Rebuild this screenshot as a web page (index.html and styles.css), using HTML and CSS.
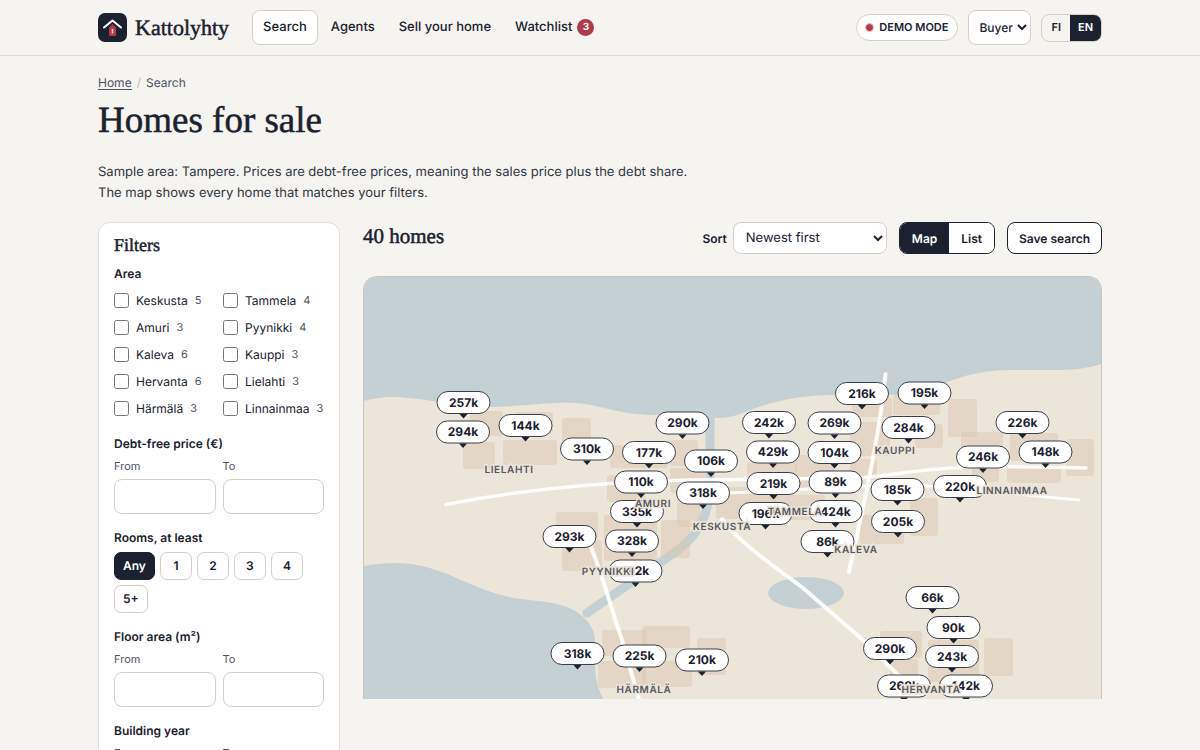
FILE: index.html
```html
<!DOCTYPE html>
<html lang="en">
<head>
<meta charset="utf-8">
<meta name="viewport" content="width=device-width, initial-scale=1">
<title>Homes for sale – Kattolyhty</title>
<link rel="stylesheet" href="styles.css">
</head>
<body>
<header class="site-header">
  <div class="wrap header-row">
    <a class="brand" href="#">
      <svg class="brand-mark" viewBox="0 0 29 29" aria-hidden="true">
        <rect width="29" height="29" rx="7" fill="#1b212e"/>
        <path d="M11 14.500L14.500 11 18 14.500V22a1 1 0 0 1-1 1h-5a1 1 0 0 1-1-1z" fill="#b03a48"/>
        <path d="M6 14.500L14.500 7.500 23 14.500" fill="none" stroke="#fff" stroke-width="2" stroke-linecap="round" stroke-linejoin="round"/>
        <path d="M14.500 16v4.500" stroke="#f3cdd0" stroke-width="1.500"/>
      </svg>
      <span>Kattolyhty</span>
    </a>
    <nav class="nav" aria-label="Main">
      <a class="nav-link current" href="#">Search</a>
      <a class="nav-link" href="#">Agents</a>
      <a class="nav-link" href="#">Sell your home</a>
      <a class="nav-link" href="#">Watchlist <span class="count">3</span></a>
    </nav>
    <div class="tools">
      <span class="demo"><span class="dot"></span>DEMO MODE</span>
      <select class="role" aria-label="Role"><option>Buyer</option><option>Agent</option></select>
      <div class="lang"><button type="button">FI</button><button type="button" class="on">EN</button></div>
    </div>
  </div>
</header>

<main class="wrap">
  <nav class="crumbs" aria-label="Breadcrumb"><a href="#">Home</a><span class="sep">/</span><span>Search</span></nav>
  <h1>Homes for sale</h1>
  <p class="intro">Sample area: Tampere. Prices are debt-free prices, meaning the sales price plus the debt share. The map shows every home that matches your filters.</p>

  <div class="columns">
    <form class="filters">
      <h2>Filters</h2>
      <fieldset>
        <legend>Area</legend>
        <div class="areas">
          <label><input type="checkbox">Keskusta <small>5</small></label>
          <label><input type="checkbox">Tammela <small>4</small></label>
          <label><input type="checkbox">Amuri <small>3</small></label>
          <label><input type="checkbox">Pyynikki <small>4</small></label>
          <label><input type="checkbox">Kaleva <small>6</small></label>
          <label><input type="checkbox">Kauppi <small>3</small></label>
          <label><input type="checkbox">Hervanta <small>6</small></label>
          <label><input type="checkbox">Lielahti <small>3</small></label>
          <label><input type="checkbox">Härmälä <small>3</small></label>
          <label><input type="checkbox">Linnainmaa <small>3</small></label>
        </div>
      </fieldset>
      <fieldset>
        <legend>Debt-free price (€)</legend>
        <div class="range">
          <label>From<input type="text" inputmode="numeric"></label>
          <label>To<input type="text" inputmode="numeric"></label>
        </div>
      </fieldset>
      <fieldset>
        <legend>Rooms, at least</legend>
        <div class="rooms">
          <button type="button" class="on">Any</button>
          <button type="button">1</button>
          <button type="button">2</button>
          <button type="button">3</button>
          <button type="button">4</button>
          <button type="button">5+</button>
        </div>
      </fieldset>
      <fieldset>
        <legend>Floor area (m²)</legend>
        <div class="range">
          <label>From<input type="text" inputmode="numeric"></label>
          <label>To<input type="text" inputmode="numeric"></label>
        </div>
      </fieldset>
      <fieldset>
        <legend>Building year</legend>
        <div class="range">
          <label>From<input type="text" inputmode="numeric"></label>
          <label>To<input type="text" inputmode="numeric"></label>
        </div>
      </fieldset>
    </form>

    <section class="results">
      <div class="results-bar">
        <h2>40 homes</h2>
        <div class="actions">
          <div class="sort"><label for="sort">Sort</label>
            <select id="sort"><option>Newest first</option><option>Lowest price</option></select></div>
          <div class="view"><button type="button" class="on">Map</button><button type="button">List</button></div>
          <button type="button" class="save">Save search</button>
        </div>
      </div>
      <div class="map">
        <svg viewBox="364 277 737 422" preserveAspectRatio="xMidYMin slice" role="group" aria-label="Map of homes">
          <defs>
            <g id="pin">
              <rect x="-26.500" y="-11" width="53" height="22" rx="11" fill="#fff" stroke="#1b212e" stroke-width="1" stroke-opacity=".85"/>
              <path d="M-4 11.500h8L0 16z" fill="#1b212e"/>
            </g>
          </defs>
          <rect x="364" y="277" width="737" height="422" fill="#ece5da"/>
          <g fill="#c5d0d5">
            <path d="M364 277H1101V364C1085 369 1072 370 1057 370H1010C975 371 963 377 947 382C925 392 912 395 885 395H830C790 396 765 404 745 412C735 416 728 418 716 418C695 413 680 414 660 415C620 416 605 405 575 403C550 402 515 407 490 407C450 406 425 398 395 397C380 397 372 399 364 401Z"/>
            <path d="M364 566C385 562 405 562 422 566C455 574 475 589 505 596C530 602 550 600 567 607C585 614 595 628 595 640V665C595 680 599 690 603 699H364Z"/>
            <ellipse cx="806" cy="593" rx="38" ry="16"/>
          </g>
          <path d="M710 415V485C709 520 695 540 668 557L587 613" fill="none" stroke="#c5d0d5" stroke-width="9" stroke-linecap="round"/>
          <g fill="#d9c8b4" fill-opacity=".5">
            <rect x="470" y="411" width="33" height="25" rx="3"/><rect x="463" y="442" width="32" height="27" rx="3"/>
            <rect x="503" y="440" width="54" height="25" rx="3"/><rect x="515" y="412" width="38" height="22" rx="3"/>
            <rect x="562" y="418" width="29" height="30" rx="3"/>
            <rect x="610" y="445" width="58" height="23" rx="3"/><rect x="607" y="475" width="38" height="27" rx="3"/>
            <rect x="670" y="440" width="28" height="26" rx="3"/><rect x="670" y="468" width="35" height="25" rx="3"/>
            <rect x="677" y="492" width="23" height="35" rx="3"/><rect x="661" y="520" width="29" height="38" rx="3"/>
            <rect x="604" y="515" width="53" height="46" rx="3"/><rect x="556" y="512" width="42" height="26" rx="3"/>
            <rect x="562" y="540" width="40" height="31" rx="3"/><rect x="716" y="487" width="60" height="32" rx="3"/>
            <rect x="747" y="462" width="50" height="24" rx="3"/><rect x="795" y="455" width="40" height="35" rx="3"/>
            <rect x="775" y="495" width="50" height="25" rx="3"/><rect x="850" y="459" width="27" height="21" rx="3"/>
            <rect x="852" y="398" width="40" height="19" rx="3"/><rect x="850" y="422" width="40" height="34" rx="3"/>
            <rect x="893" y="395" width="47" height="20" rx="3"/><rect x="915" y="424" width="28" height="24" rx="3"/>
            <rect x="948" y="399" width="29" height="38" rx="3"/><rect x="961" y="432" width="42" height="22" rx="3"/>
            <rect x="1010" y="433" width="48" height="28" rx="3"/><rect x="1066" y="439" width="28" height="37" rx="3"/>
            <rect x="1007" y="465" width="54" height="18" rx="3"/><rect x="972" y="462" width="27" height="20" rx="3"/>
            <rect x="910" y="498" width="28" height="38" rx="3"/><rect x="860" y="515" width="44" height="29" rx="3"/>
            <rect x="880" y="631" width="42" height="27" rx="3"/><rect x="890" y="659" width="28" height="18" rx="3"/>
            <rect x="928" y="640" width="51" height="42" rx="3"/><rect x="984" y="638" width="29" height="38" rx="3"/>
            <rect x="602" y="630" width="45" height="26" rx="3"/><rect x="642" y="626" width="48" height="22" rx="3"/>
            <rect x="697" y="638" width="29" height="37" rx="3"/><rect x="598" y="661" width="48" height="27" rx="3"/>
            <rect x="642" y="661" width="50" height="26" rx="3"/>
          </g>
          <g fill="none" stroke="#fff" stroke-width="4" stroke-linecap="round" stroke-opacity=".9">
            <path stroke-width="3.500" d="M446 504.500C520 490 600 482 690 480L860 478C900 474 930 468 970 467C1010 466 1050 467 1086 468"/>
            <path stroke-width="3" d="M722 493C790 492 840 485 900 485C960 486 1020 495 1079 500"/>
            <path d="M885.500 374C880 430 870 475 849 572"/>
            <path d="M722 519C735 536 750 548 768 562L803 588L863 640L904 681"/>
            <path d="M588 540C602 572 610 605 622 640L640 703"/>
          </g>
          <g class="pins">
            <g transform="translate(463.500 402.500)"><use href="#pin"/><text y="4">257k</text></g>
            <g transform="translate(463 432)"><use href="#pin"/><text y="4">294k</text></g>
            <g transform="translate(525.500 425.500)"><use href="#pin"/><text y="4">144k</text></g>
            <g transform="translate(587 449)"><use href="#pin"/><text y="4">310k</text></g>
            <g transform="translate(682.500 423)"><use href="#pin"/><text y="4">290k</text></g>
            <g transform="translate(649 452.500)"><use href="#pin"/><text y="4">177k</text></g>
            <g transform="translate(711 461)"><use href="#pin"/><text y="4">106k</text></g>
            <g transform="translate(641 482)"><use href="#pin"/><text y="4">110k</text></g>
            <g transform="translate(703 493)"><use href="#pin"/><text y="4">318k</text></g>
            <g transform="translate(637 511.500)"><use href="#pin"/><text y="4">335k</text></g>
            <g transform="translate(632 541)"><use href="#pin"/><text y="4">328k</text></g>
            <g transform="translate(635.500 571)"><use href="#pin"/><text y="4">192k</text></g>
            <g transform="translate(569.500 536.500)"><use href="#pin"/><text y="4">293k</text></g>
            <g transform="translate(577.500 653.500)"><use href="#pin"/><text y="4">318k</text></g>
            <g transform="translate(639.500 656)"><use href="#pin"/><text y="4">225k</text></g>
            <g transform="translate(702 660)"><use href="#pin"/><text y="4">210k</text></g>
            <g transform="translate(769 422.500)"><use href="#pin"/><text y="4">242k</text></g>
            <g transform="translate(834.500 423)"><use href="#pin"/><text y="4">269k</text></g>
            <g transform="translate(773 452)"><use href="#pin"/><text y="4">429k</text></g>
            <g transform="translate(834.500 452.500)"><use href="#pin"/><text y="4">104k</text></g>
            <g transform="translate(773.500 483.500)"><use href="#pin"/><text y="4">219k</text></g>
            <g transform="translate(835.500 482)"><use href="#pin"/><text y="4">89k</text></g>
            <g transform="translate(765.500 513.500)"><use href="#pin"/><text y="4">196k</text></g>
            <g transform="translate(835.500 511.500)"><use href="#pin"/><text y="4">424k</text></g>
            <g transform="translate(827.500 541.500)"><use href="#pin"/><text y="4">86k</text></g>
            <g transform="translate(862 393.500)"><use href="#pin"/><text y="4">216k</text></g>
            <g transform="translate(924.500 393)"><use href="#pin"/><text y="4">195k</text></g>
            <g transform="translate(908.500 427.500)"><use href="#pin"/><text y="4">284k</text></g>
            <g transform="translate(1022.500 422.500)"><use href="#pin"/><text y="4">226k</text></g>
            <g transform="translate(1045.500 452)"><use href="#pin"/><text y="4">148k</text></g>
            <g transform="translate(983 457)"><use href="#pin"/><text y="4">246k</text></g>
            <g transform="translate(960 486.500)"><use href="#pin"/><text y="4">220k</text></g>
            <g transform="translate(897.500 489.500)"><use href="#pin"/><text y="4">185k</text></g>
            <g transform="translate(898 521.500)"><use href="#pin"/><text y="4">205k</text></g>
            <g transform="translate(932.500 597.500)"><use href="#pin"/><text y="4">66k</text></g>
            <g transform="translate(953.500 627.500)"><use href="#pin"/><text y="4">90k</text></g>
            <g transform="translate(890 648.500)"><use href="#pin"/><text y="4">290k</text></g>
            <g transform="translate(952 656.500)"><use href="#pin"/><text y="4">243k</text></g>
            <g transform="translate(904 686)"><use href="#pin"/><text y="4">268k</text></g>
            <g transform="translate(966 686)"><use href="#pin"/><text y="4">142k</text></g>
          </g>
          <g class="places">
            <text x="509" y="472.500">LIELAHTI</text>
            <text x="653" y="507">AMURI</text>
            <text x="722" y="530">KESKUSTA</text>
            <text x="608" y="574.500">PYYNIKKI</text>
            <text x="644" y="692.500">HÄRMÄLÄ</text>
            <text x="795" y="514.500">TAMMELA</text>
            <text x="856" y="552.500">KALEVA</text>
            <text x="895" y="453.500">KAUPPI</text>
            <text x="1012" y="493.500">LINNAINMAA</text>
            <text x="931" y="692.500">HERVANTA</text>
          </g>
        </svg>
      </div>
    </section>
  </div>
</main>
</body>
</html>
```
FILE: styles.css
```css
:root {
  --ink: #1b212e;
  --soft: #4d5362;
  --line: #d6cfc8;
  --paper: #f6f4f0;
  --red: #b03a48;
  --serif: "Liberation Serif", serif;
}
* { box-sizing: border-box; }
body {
  margin: 0;
  background: var(--paper);
  color: var(--ink);
  font: 13px/21px Inter, sans-serif;
  text-rendering: geometricPrecision;
}
a { color: inherit; text-decoration: none; }
button, select, input { font: inherit; color: inherit; text-rendering: inherit; }
button { cursor: pointer; }
h1, h2, .brand {
  margin: 0;
  font-family: var(--serif);
  font-weight: 400;
  -webkit-text-stroke: 0.5px currentColor;
}
.wrap { width: calc(100% - 32px); max-width: 1004px; margin: 0 auto; }

.site-header { border-bottom: 1px solid #e0dbd5; }
.header-row { display: flex; align-items: center; min-height: 55px; }
.brand { display: flex; align-items: center; gap: 8px; font-size: 22px; line-height: 28px; }
.brand-mark { width: 29px; height: 29px; }
.nav { display: flex; gap: 2px; margin-left: 23px; }
.nav-link {
  display: flex;
  align-items: center;
  gap: 5px;
  height: 35px;
  padding: 0 10px;
  border: 1px solid transparent;
  border-radius: 8px;
  font-weight: 500;
}
.nav-link.current { background: #fff; border-color: var(--line); }
.count {
  width: 17px;
  height: 17px;
  border-radius: 50%;
  background: var(--red);
  color: #fff;
  font-size: 10px;
  font-weight: 700;
  line-height: 17px;
  text-align: center;
}
.tools { display: flex; align-items: center; gap: 10px; margin-left: auto; }
.demo {
  display: flex;
  align-items: center;
  gap: 5px;
  height: 27px;
  padding: 0 9px 0 8px;
  border: 1px solid var(--line);
  border-radius: 14px;
  background: #fff;
  font-size: 11px;
  font-weight: 600;
}
.dot { width: 9px; height: 9px; border: 1px solid #efc9cc; border-radius: 50%; background: var(--red); }
.role, #sort { border: 1px solid var(--line); border-radius: 8px; background: #fff; }
.role { width: 63px; height: 35px; padding: 0 0 0 6px; font-size: 12px; font-weight: 500; }
.lang, .view { display: flex; overflow: hidden; border: 1px solid var(--line); border-radius: 8px; }
.lang button {
  height: 26px;
  padding: 0 9px;
  border: 0;
  background: transparent;
  font-size: 11px;
  font-weight: 600;
}
.lang .on { padding: 0 8px; }
.lang .on, .view .on, .rooms .on { background: var(--ink); color: #fff; }

.crumbs { display: flex; gap: 5px; padding-top: 18px; color: var(--soft); font-size: 12px; line-height: 18px; }
.crumbs a { height: 16px; border-bottom: 1px solid currentColor; }
.sep { color: #c9b8a8; }
h1 { margin-top: 5px; font-size: 37px; line-height: 48px; }
.intro { max-width: 610px; margin: 17px 0 18px; color: #2f3542; }

.columns { display: grid; grid-template-columns: 242px minmax(0, 1fr); gap: 23px; align-items: start; }
.filters { padding: 12px 15px 24px; border: 1px solid #e3ded8; border-radius: 12px; background: #fff; }
.filters h2 { font-size: 18px; line-height: 20px; }
fieldset { min-width: 0; margin: 0 0 15px; padding: 0; border: 0; }
.filters h2 + fieldset { margin-top: 10px; margin-bottom: 16px; }
legend { padding: 0; font-size: 12px; font-weight: 600; line-height: 18px; }
.areas { display: grid; grid-template-columns: 101px 101px; gap: 5px 8px; margin-top: 6px; }
.areas label { display: flex; align-items: center; height: 22px; font-size: 12px; white-space: nowrap; }
.areas input { flex: none; width: 15px; height: 15px; margin: 0 7px 0 0; }
.areas small { margin-left: 7px; color: var(--soft); font-size: 11px; }
.range { display: grid; grid-template-columns: 1fr 1fr; gap: 7px; margin-top: 4px; }
.range label { color: var(--soft); font-size: 11px; line-height: 18px; }
.range input {
  display: block;
  width: 100%;
  height: 35px;
  margin-top: 4px;
  padding: 0 8px;
  border: 1px solid var(--line);
  border-radius: 8px;
  background: #fff;
}
.rooms { display: flex; flex-wrap: wrap; gap: 5px; margin-top: 5px; }
.rooms button {
  min-width: 32px;
  height: 28px;
  padding: 0 8px;
  border: 1px solid var(--line);
  border-radius: 7px;
  background: #fff;
  font-size: 12px;
  font-weight: 600;
  line-height: 18px;
}
.rooms .on { background: var(--ink); border-color: var(--ink); }

.results-bar { display: flex; justify-content: space-between; align-items: flex-start; margin-bottom: 22px; }
.results-bar h2 { font-size: 21px; line-height: 28px; }
.actions { display: flex; gap: 12px; align-items: center; }
.sort { display: flex; gap: 6px; align-items: center; font-size: 12px; font-weight: 600; }
#sort { width: 154px; height: 32px; padding: 0 0 0 8px; font-size: 13px; font-weight: 400; }
.view { border-color: var(--ink); }
.view button { height: 30px; padding: 0 12px; border: 0; background: #fff; font-size: 12px; font-weight: 600; }
.view .on { background: var(--ink); }
.save {
  height: 32px;
  padding: 0 11px;
  border: 1px solid var(--ink);
  border-radius: 8px;
  background: #fff;
  font-size: 12px;
  font-weight: 600;
}
.map {
  overflow: hidden;
  border: 1px solid #c9c5bf;
  border-bottom: 0;
  border-radius: 14px 14px 0 0;
}
.map svg { display: block; width: 100%; height: auto; }
.pins text { fill: var(--ink); font-size: 12px; font-weight: 700; text-anchor: middle; }
.places text {
  fill: #55585f;
  stroke: #ece5da;
  stroke-width: 3px;
  paint-order: stroke;
  font-size: 10px;
  font-weight: 600;
  letter-spacing: 0.6px;
  text-anchor: middle;
}
@media (max-width: 900px) {
  .header-row, .results-bar, .actions { flex-wrap: wrap; gap: 10px; }
  .columns { grid-template-columns: minmax(0, 1fr); }
}
```
